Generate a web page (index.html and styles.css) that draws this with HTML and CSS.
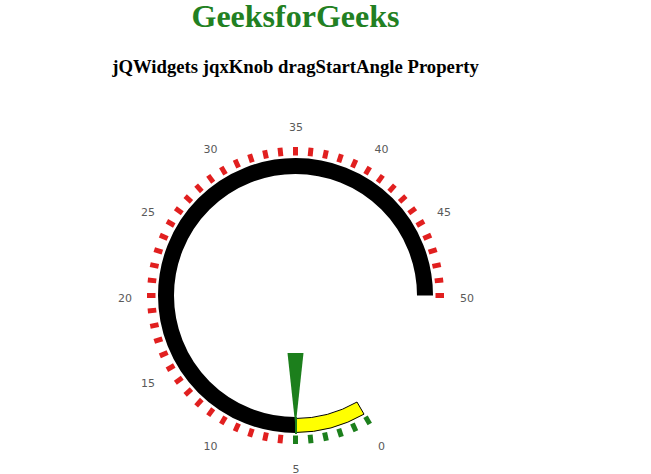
FILE: index.html
```html
<!DOCTYPE html>
<html>
<head>
<meta charset="utf-8">
<title>jqxKnob dragStartAngle</title>
<link rel="stylesheet" href="styles.css">
</head>
<body>
<div class="page">
  <h1 class="title">GeeksforGeeks</h1>
  <h3 class="subtitle">jQWidgets jqxKnob dragStartAngle Property</h3>
  <svg class="knob" viewBox="0 0 381 369" width="381" height="369" xmlns="http://www.w3.org/2000/svg">
    <defs>
      <line id="tick" x1="330.5" y1="190.5" x2="339" y2="190.5"/>
    </defs>
    <g class="ticks-green">
      <use href="#tick" transform="rotate(60 190.5 190.5)"/>
      <use href="#tick" transform="rotate(66 190.5 190.5)"/>
      <use href="#tick" transform="rotate(72 190.5 190.5)"/>
      <use href="#tick" transform="rotate(78 190.5 190.5)"/>
      <use href="#tick" transform="rotate(84 190.5 190.5)"/>
      <use href="#tick" transform="rotate(90 190.5 190.5)"/>
    </g>
    <g class="ticks-red">
      <use href="#tick" transform="rotate(96 190.5 190.5)"/>
      <use href="#tick" transform="rotate(102 190.5 190.5)"/>
      <use href="#tick" transform="rotate(108 190.5 190.5)"/>
      <use href="#tick" transform="rotate(114 190.5 190.5)"/>
      <use href="#tick" transform="rotate(120 190.5 190.5)"/>
      <use href="#tick" transform="rotate(126 190.5 190.5)"/>
      <use href="#tick" transform="rotate(132 190.5 190.5)"/>
      <use href="#tick" transform="rotate(138 190.5 190.5)"/>
      <use href="#tick" transform="rotate(144 190.5 190.5)"/>
      <use href="#tick" transform="rotate(150 190.5 190.5)"/>
      <use href="#tick" transform="rotate(156 190.5 190.5)"/>
      <use href="#tick" transform="rotate(162 190.5 190.5)"/>
      <use href="#tick" transform="rotate(168 190.5 190.5)"/>
      <use href="#tick" transform="rotate(174 190.5 190.5)"/>
      <use href="#tick" transform="rotate(180 190.5 190.5)"/>
      <use href="#tick" transform="rotate(186 190.5 190.5)"/>
      <use href="#tick" transform="rotate(192 190.5 190.5)"/>
      <use href="#tick" transform="rotate(198 190.5 190.5)"/>
      <use href="#tick" transform="rotate(204 190.5 190.5)"/>
      <use href="#tick" transform="rotate(210 190.5 190.5)"/>
      <use href="#tick" transform="rotate(216 190.5 190.5)"/>
      <use href="#tick" transform="rotate(222 190.5 190.5)"/>
      <use href="#tick" transform="rotate(228 190.5 190.5)"/>
      <use href="#tick" transform="rotate(234 190.5 190.5)"/>
      <use href="#tick" transform="rotate(240 190.5 190.5)"/>
      <use href="#tick" transform="rotate(246 190.5 190.5)"/>
      <use href="#tick" transform="rotate(252 190.5 190.5)"/>
      <use href="#tick" transform="rotate(258 190.5 190.5)"/>
      <use href="#tick" transform="rotate(264 190.5 190.5)"/>
      <use href="#tick" transform="rotate(270 190.5 190.5)"/>
      <use href="#tick" transform="rotate(276 190.5 190.5)"/>
      <use href="#tick" transform="rotate(282 190.5 190.5)"/>
      <use href="#tick" transform="rotate(288 190.5 190.5)"/>
      <use href="#tick" transform="rotate(294 190.5 190.5)"/>
      <use href="#tick" transform="rotate(300 190.5 190.5)"/>
      <use href="#tick" transform="rotate(306 190.5 190.5)"/>
      <use href="#tick" transform="rotate(312 190.5 190.5)"/>
      <use href="#tick" transform="rotate(318 190.5 190.5)"/>
      <use href="#tick" transform="rotate(324 190.5 190.5)"/>
      <use href="#tick" transform="rotate(330 190.5 190.5)"/>
      <use href="#tick" transform="rotate(336 190.5 190.5)"/>
      <use href="#tick" transform="rotate(342 190.5 190.5)"/>
      <use href="#tick" transform="rotate(348 190.5 190.5)"/>
      <use href="#tick" transform="rotate(354 190.5 190.5)"/>
      <use href="#tick" transform="rotate(360 190.5 190.5)"/>
    </g>
    <path class="track" d="M 190.5 320 A 129.5 129.5 0 1 1 320 190.5"/>
    <path class="progress" d="M 190.5 327.5 A 137 137 0 0 0 259 309.14 L 252 297.02 A 123 123 0 0 1 190.5 313.5 Z"/>
    <polygon class="pointer" points="182.5,248 198.5,248 190.5,322"/>
    <line class="pointer-line" x1="191" y1="312" x2="191" y2="329"/>
    <g class="labels">
      <text x="276.5" y="344.6">0</text>
      <text x="191" y="367.5">5</text>
      <text x="105.5" y="344.6">10</text>
      <text x="42.9" y="282">15</text>
      <text x="20" y="196.5">20</text>
      <text x="42.9" y="111">25</text>
      <text x="105.5" y="48.4">30</text>
      <text x="191" y="25.5">35</text>
      <text x="276.5" y="48.4">40</text>
      <text x="339.1" y="111">45</text>
      <text x="362" y="196.5">50</text>
    </g>
  </svg>
</div>
</body>
</html>
```

FILE: styles.css
```css
html, body {
  margin: 0;
  padding: 0;
  background: #ffffff;
  overflow: hidden;
}

.page {
  width: 591px;
  text-align: center;
  font-family: "Liberation Serif", "Times New Roman", serif;
}

.title {
  margin: 0;
  font-size: 32px;
  line-height: 32px;
  font-weight: bold;
  color: #228022;
}

.subtitle {
  margin: 24px 0 0;
  font-size: 18.72px;
  line-height: 22px;
  font-weight: bold;
  color: #000000;
}

.knob {
  display: block;
  margin: 27px auto 0;
  width: 381px;
  height: 369px;
}

.ticks-green {
  stroke: #1c7f1c;
  stroke-width: 5;
}

.ticks-red {
  stroke: #e11f1f;
  stroke-width: 5;
}

.track {
  fill: none;
  stroke: #000000;
  stroke-width: 16;
}

.progress {
  fill: #ffff00;
  stroke: #000000;
  stroke-width: 1;
}

.pointer {
  fill: #1c7f1c;
}

.pointer-line {
  stroke: #1c7f1c;
  stroke-width: 2;
}

.labels text {
  font-family: "DejaVu Sans", Verdana, sans-serif;
  font-size: 11px;
  fill: #5a5a5a;
  text-anchor: middle;
}
```
